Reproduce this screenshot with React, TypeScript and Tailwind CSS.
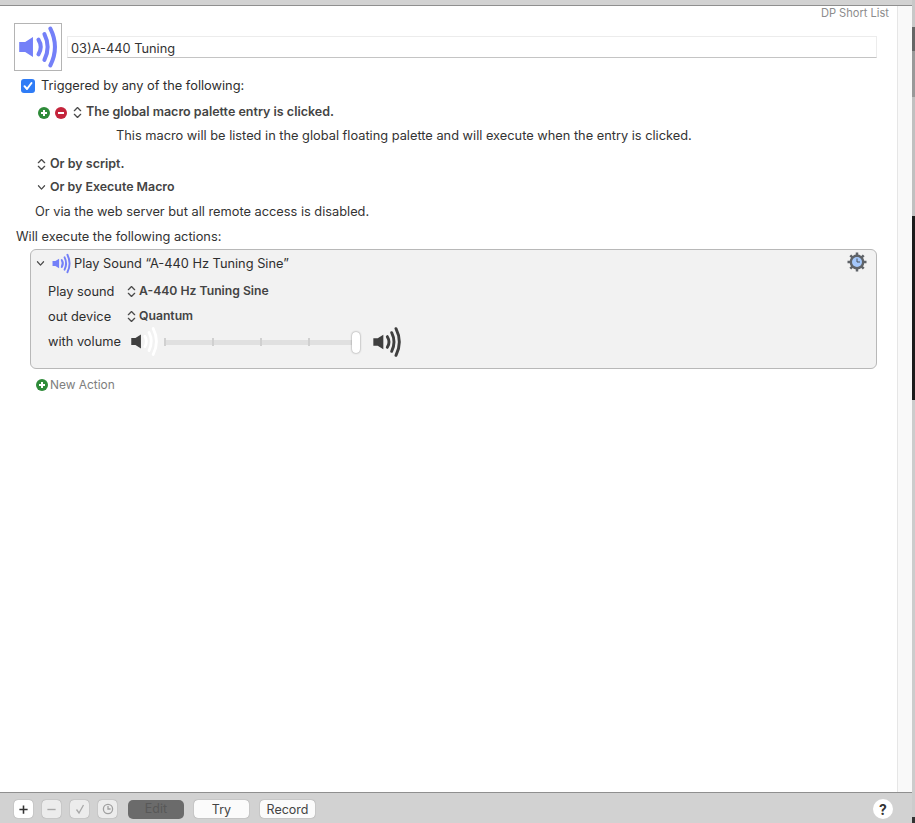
import React from 'react';

const font = { fontFamily: 'Inter, "Liberation Sans", sans-serif' };

// speaker with sound waves, colour comes from the caller
const Speaker: React.FC<{ className?: string; color: string; waveColor?: string }> = ({ className, color, waveColor }) => (
  <svg viewBox="0 0 48 48" className={className} fill="none">
    <path d="M3.5 18.5h6.5L18.5 13v22L10 29.5H3.5z" fill={color} />
    <g stroke={waveColor ?? color} strokeWidth="4.4" strokeLinecap="round">
      <path d="M24.5 16Q29.5 24 24.5 32" />
      <path d="M31 10Q38 24 31 38" />
      <path d="M37.5 4Q47.5 24 37.5 44" />
    </g>
  </svg>
);

const UpDown: React.FC<{ className?: string }> = ({ className }) => (
  <svg viewBox="0 0 10 14" className={`w-[9px] h-[13px] shrink-0 ${className ?? ''}`} fill="none" stroke="#4a4a4a" strokeWidth="1.4" strokeLinecap="round" strokeLinejoin="round">
    <path d="M1.5 5 5 1.5 8.5 5" />
    <path d="M1.5 9 5 12.5 8.5 9" />
  </svg>
);

const ChevronDown: React.FC<{ className?: string }> = ({ className }) => (
  <svg viewBox="0 0 10 8" className={`w-[9px] h-[7px] shrink-0 ${className ?? ''}`} fill="none" stroke="#4a4a4a" strokeWidth="1.4" strokeLinecap="round" strokeLinejoin="round">
    <path d="M1.5 2 5 5.8 8.5 2" />
  </svg>
);

const RoundButton: React.FC<{ color: string; minus?: boolean }> = ({ color, minus }) => (
  <span className={`w-3 h-3 rounded-full flex items-center justify-center shrink-0 ${color}`}>
    <svg viewBox="0 0 12 12" className="w-3 h-3" stroke="#ffffff" strokeWidth="2">
      <path d="M3 6h6" />
      {!minus && <path d="M6 3v6" />}
    </svg>
  </span>
);

const Gear: React.FC = () => (
  <svg viewBox="0 0 20 20" className="w-[20px] h-[20px]">
    <g stroke="#5f6368" strokeWidth="2.5">
      <path d="M10 .5v19M.5 10h19M3.3 3.3l13.4 13.4M16.7 3.3 3.3 16.7" />
    </g>
    <circle cx="10" cy="10" r="7.4" fill="#5f6368" />
    <circle cx="10" cy="10" r="5" fill="#a5c8fb" />
    <path d="M10 6.5V10h3" fill="none" stroke="#4a5560" strokeWidth="1" />
  </svg>
);

const ToolButton: React.FC<{ dim?: boolean; children: React.ReactNode }> = ({ dim, children }) => (
  <div className={`w-[19px] h-[18px] rounded-[4px] flex items-center justify-center shadow-[0_0_1px_rgba(0,0,0,0.45)] ${dim ? 'bg-[#ececec]' : 'bg-white'}`}>
    {children}
  </div>
);

const TextButton: React.FC<{ label: string; width: string }> = ({ label, width }) => (
  <div className={`${width} h-[18px] pt-[2px] rounded-[4px] bg-[#fbfbfb] shadow-[0_0_1px_rgba(0,0,0,0.5)] flex items-center justify-center text-[12.5px] text-[#444444]`}>
    {label}
  </div>
);

const SliderTick: React.FC = () => <div className="w-[2px] h-[8px] bg-[#d0d0d0]" />;

const App: React.FC = () => {
  return (
    <div className="w-[915px] h-[823px] flex overflow-hidden bg-white text-[12.8px] text-[#2e2e2e]" style={font}>
      <div className="w-[912px] flex flex-col">
        <div className="h-[6px] shrink-0 bg-[#d2d2d2] border-b border-[#8f8f8f]" />

        <div className="flex-1 flex min-h-0">
          <div className="w-[898px] shrink-0 border-r border-[#e6e6e6] flex flex-col">
            <div className="h-[14px] pr-[8px] text-right text-[11.1px] leading-[14px] text-[#8c8c8c]">DP Short List</div>

            {/* macro name */}
            <div className="flex items-center mt-[3px] pl-[14px]">
              <div className="w-[48px] h-[48px] border border-[#b4b4b4] flex items-center justify-center">
                <Speaker className="w-[44px] h-[44px]" color="#7480f8" />
              </div>
              <div className="ml-[5px] w-[810px] h-[22px] pt-[3px] border border-[#ececec] border-b-[#c4c4c4] pl-[3px] flex items-center text-[#333333]">
                03)A-440 Tuning
              </div>
            </div>

            {/* triggers */}
            <div className="flex items-center mt-[7px] pl-[21px] h-[15px]">
              <div className="w-[14px] h-[14px] rounded-[3px] bg-[#2f7cf6] flex items-center justify-center">
                <svg viewBox="0 0 14 14" className="w-[14px] h-[14px]" fill="none" stroke="#ffffff" strokeWidth="2" strokeLinecap="round" strokeLinejoin="round">
                  <path d="M3.5 7.2 6 10l4.5-6" />
                </svg>
              </div>
              <span className="ml-[6px]">Triggered by any of the following:</span>
            </div>

            <div className="flex items-center mt-[12px] pl-[38px] h-[15px] text-[12.5px] font-semibold text-[#444444]">
              <RoundButton color="bg-[#2e8b39]" />
              <span className="w-[5px]" />
              <RoundButton color="bg-[#c4243c]" minus />
              <UpDown className="ml-[6px]" />
              <span className="ml-[4px]">The global macro palette entry is clicked.</span>
            </div>
            <div className="mt-[8px] pl-[116px] h-[15px] leading-[15px] text-[#333333]">
              This macro will be listed in the global floating palette and will execute when the entry is clicked.
            </div>

            <div className="flex items-center mt-[14px] pl-[37px] h-[15px] text-[12.5px] font-semibold text-[#444444]">
              <UpDown />
              <span className="ml-[4px]">Or by script.</span>
            </div>
            <div className="flex items-center mt-[8px] pl-[37px] h-[15px] text-[12.4px] font-semibold text-[#444444]">
              <ChevronDown />
              <span className="ml-[4px]">Or by Execute Macro</span>
            </div>
            <div className="mt-[9px] pl-[35px] h-[15px] leading-[15px] text-[#333333]">
              Or via the web server but all remote access is disabled.
            </div>
            <div className="mt-[10px] pl-[16px] h-[15px] leading-[15px] text-[#333333]">
              Will execute the following actions:
            </div>

            {/* action panel */}
            <div className="ml-[30px] mt-[5px] w-[847px] h-[120px] rounded-[6px] border border-[#b8b8b8] bg-[#f2f2f2] flex flex-col">
              <div className="flex items-center h-[15px] mt-[6px] pl-[5px] pr-[9px]">
                <ChevronDown />
                <Speaker className="w-[21px] h-[21px] ml-[6px] shrink-0" color="#7480f8" />
                <span className="ml-[2px]">Play Sound “A-440 Hz Tuning Sine”</span>
                <span className="ml-auto -mt-[4px]"><Gear /></span>
              </div>
              <div className="flex items-center h-[15px] mt-[13px] pl-[17px]">
                <span className="w-[79px]">Play sound</span>
                <UpDown />
                <span className="ml-[3px] text-[12.2px] font-semibold text-[#444444]">A-440 Hz Tuning Sine</span>
              </div>
              <div className="flex items-center h-[15px] mt-[10px] pl-[17px]">
                <span className="w-[79px]">out device</span>
                <UpDown />
                <span className="ml-[3px] text-[12.2px] font-semibold text-[#444444]">Quantum</span>
              </div>
              <div className="flex items-center h-[15px] mt-[10px] pl-[17px]">
                <span className="w-[82px]">with volume</span>
                <Speaker className="w-[31px] h-[31px] -ml-[1px] shrink-0" color="#3f3f3f" waveColor="#ffffff" />
                <div className="relative w-[194px] ml-[4px] mt-[1px] h-[5px] bg-[#e0e0e0] flex justify-between items-center shrink-0">
                  <SliderTick />
                  <SliderTick />
                  <SliderTick />
                  <SliderTick />
                  <SliderTick />
                  <div className="absolute right-[-2px] top-[-8px] w-[8px] h-[21px] rounded-[4px] bg-white shadow-[0_0_2px_rgba(0,0,0,0.5)]" />
                </div>
                <Speaker className="w-[32px] h-[32px] ml-[13px] shrink-0" color="#3f3f3f" />
              </div>
            </div>

            <div className="flex items-center mt-[8px] pl-[36px] h-[15px] text-[11.9px] text-[#7e7e7e]">
              <RoundButton color="bg-[#2e8b39]" />
              <span className="ml-[2px]">New Action</span>
            </div>
          </div>
          <div className="flex-1 bg-[#f9f9f9]" />
        </div>

        {/* bottom toolbar */}
        <div className="h-[31px] shrink-0 pt-[2px] bg-[#d2d2d2] border-t border-[#8f8f8f] flex items-center pl-[14px] pr-[19px] text-[12.5px]">
          <ToolButton>
            <svg viewBox="0 0 12 12" className="w-[11px] h-[11px]" stroke="#333333" strokeWidth="1.7"><path d="M1.5 6h9M6 1.5v9" /></svg>
          </ToolButton>
          <span className="w-[9px]" />
          <ToolButton dim>
            <svg viewBox="0 0 12 12" className="w-[11px] h-[11px]" stroke="#a8a8a8" strokeWidth="1.5"><path d="M1.5 6h9" /></svg>
          </ToolButton>
          <span className="w-[9px]" />
          <ToolButton dim>
            <svg viewBox="0 0 12 12" className="w-[12px] h-[12px]" fill="none" stroke="#a8a8a8" strokeWidth="1.3"><path d="M2.5 6.5 5 10l4.5-8" /></svg>
          </ToolButton>
          <span className="w-[9px]" />
          <ToolButton dim>
            <svg viewBox="0 0 12 12" className="w-[12px] h-[12px]" fill="none" stroke="#a0a0a0" strokeWidth="1.3"><circle cx="6" cy="6" r="4.6" /><path d="M6 3v3h2.6" /></svg>
          </ToolButton>
          <div className="ml-[11px] w-[56px] h-[19px] pt-[1px] rounded-[5px] bg-[#6b6b6b] flex items-center justify-center text-[#585858]">Edit</div>
          <div className="ml-[10px]"><TextButton label="Try" width="w-[55px]" /></div>
          <div className="ml-[11px]"><TextButton label="Record" width="w-[55px]" /></div>
          <div className="ml-auto w-[20px] h-[20px] rounded-full bg-white flex items-center justify-center text-[14px] font-bold text-[#333333]">?</div>
        </div>
      </div>

      {/* sliver of whatever is behind the window */}
      <div className="w-[3px] flex flex-col">
        <div className="h-[27px] bg-[#c8c8c8]" />
        <div className="h-[24px] bg-[#666666]" />
        <div className="h-[46px] bg-[#999999]" />
        <div className="h-[119px] bg-[#c0c0c0]" />
        <div className="h-[184px] bg-[#1c1c1c]" />
        <div className="flex-1 bg-[#cccccc]" />
        <div className="h-[6px] bg-[#333333]" />
      </div>
    </div>
  );
};

export default App;
